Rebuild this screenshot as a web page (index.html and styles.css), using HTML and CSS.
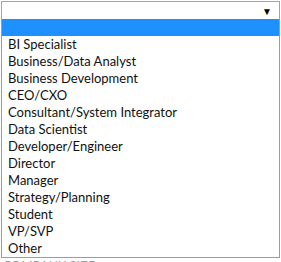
FILE: index.html
```html
<!DOCTYPE html>
<html>
<head>
<meta charset="utf-8">
<link rel="stylesheet" href="styles.css">
</head>
<body>
<div class="page">
  <div class="select">
    <span class="value"></span>
    <span class="arrow">▼</span>
  </div>
  <div class="below">Company Size</div>
  <ul class="listbox">
    <li class="opt selected">&nbsp;</li>
    <li class="opt">BI Specialist</li>
    <li class="opt">Business/Data Analyst</li>
    <li class="opt">Business Development</li>
    <li class="opt">CEO/CXO</li>
    <li class="opt">Consultant/System Integrator</li>
    <li class="opt">Data Scientist</li>
    <li class="opt">Developer/Engineer</li>
    <li class="opt">Director</li>
    <li class="opt">Manager</li>
    <li class="opt">Strategy/Planning</li>
    <li class="opt">Student</li>
    <li class="opt">VP/SVP</li>
    <li class="opt">Other</li>
  </ul>
</div>
</body>
</html>
```

FILE: styles.css
```css
html, body {
  margin: 0;
  padding: 0;
  background: #ffffff;
}
.page {
  position: relative;
  width: 281px;
  height: 262px;
  overflow: hidden;
  font-family: Lato, "Noto Sans", sans-serif;
}
.select {
  margin: 1px 1px 0 1px;
  height: 17px;
  border: 1px solid #89a6e0;
  display: flex;
  align-items: center;
  justify-content: flex-end;
  padding-right: 7px;
  box-sizing: content-box;
}
.arrow {
  font-size: 10px;
  color: #000;
  line-height: 1;
}
.below {
  margin: 239px 0 0 3px;
  font-size: 12px;
  line-height: 12px;
  height: 3px;
  overflow: hidden;
  color: #9a9a9a;
  text-transform: uppercase;
  letter-spacing: 0.5px;
}
.listbox {
  position: absolute;
  top: 19px;
  left: 1px;
  width: 277px;
  margin: 0;
  padding: 0;
  list-style: none;
  background: #fff;
  border: 1px solid #7e9ee0;
  border-top: none;
}
.opt {
  height: 17px;
  line-height: 17px;
  padding-left: 6px;
  font-size: 13px;
  color: #111;
  white-space: nowrap;
}
.opt.selected {
  background: #1e90ff;
  color: #fff;
}
```
